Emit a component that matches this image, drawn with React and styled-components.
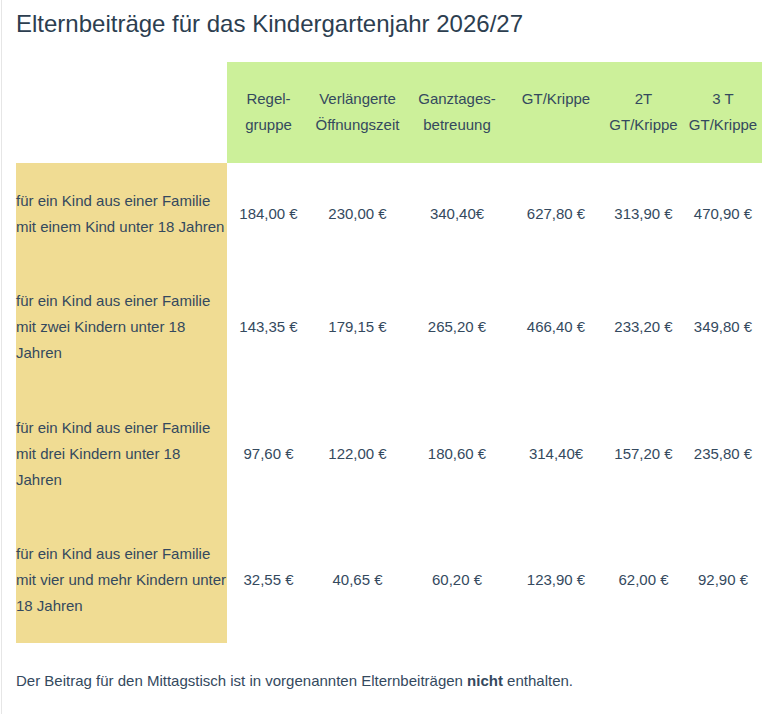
import React from "react";
import styled, { createGlobalStyle } from "styled-components";

const GlobalStyle = createGlobalStyle`
  html, body {
    margin: 0;
    padding: 0;
    background: #ffffff;
  }
  body {
    font-family: "Liberation Sans", Arial, sans-serif;
    color: #34495e;
  }
`;

// column widths, first is the label column
const widths = [211, 83, 95, 104, 94, 81, 78];

const headers = [
  ["Regel-", "gruppe"],
  ["Verlängerte", "Öffnungszeit"],
  ["Ganztages-", "betreuung"],
  ["GT/Krippe"],
  ["2T", "GT/Krippe"],
  ["3 T", "GT/Krippe"],
];

const rows = [
  {
    label: ["für ein Kind aus einer Familie", "mit einem Kind unter 18 Jahren"],
    values: ["184,00 €", "230,00 €", "340,40€", "627,80 €", "313,90 €", "470,90 €"],
  },
  {
    label: ["für ein Kind aus einer Familie", "mit zwei Kindern unter 18", "Jahren"],
    values: ["143,35 €", "179,15 €", "265,20 €", "466,40 €", "233,20 €", "349,80 €"],
  },
  {
    label: ["für ein Kind aus einer Familie", "mit drei Kindern unter 18", "Jahren"],
    values: ["97,60 €", "122,00 €", "180,60 €", "314,40€", "157,20 €", "235,80 €"],
  },
  {
    label: ["für ein Kind aus einer Familie", "mit vier und mehr Kindern unter", "18 Jahren"],
    values: ["32,55 €", "40,65 €", "60,20 €", "123,90 €", "62,00 €", "92,90 €"],
  },
];

const Page = styled.div`
  margin-left: 1px;
  border-left: 1px solid #e6e6e6;
  padding: 9px 0 30px 14px;
  min-height: 680px;
`;

const Title = styled.h2`
  margin: 0 0 24px;
  font-size: 24px;
  font-weight: 400;
  line-height: 29px;
  color: #2c3e50;
`;

const Table = styled.table`
  border-collapse: collapse;
  table-layout: fixed;
  width: 746px;
  font-size: 15px;
  line-height: 26px;
`;

const HeadCell = styled.th`
  padding: 24px 0 25px;
  font-weight: 400;
  text-align: center;
  white-space: nowrap;
  vertical-align: top;
  background: ${(p) => (p.$empty ? "transparent" : "#ccf09a")};
`;

const LabelCell = styled.td`
  padding: 24.5px 0 24px;
  background: #f0dc93;
  white-space: nowrap;
  vertical-align: middle;
`;

const ValueCell = styled.td`
  padding: 24.5px 0 24px;
  text-align: center;
  white-space: nowrap;
  vertical-align: middle;
`;

const Note = styled.p`
  margin: 25px 0 0;
  font-size: 15px;
  line-height: 26px;
`;

const Lines = ({ lines }) =>
  lines.map((l, i) => (
    <React.Fragment key={i}>
      {i > 0 && <br />}
      {l}
    </React.Fragment>
  ));

export default function App() {
  return (
    <>
      <GlobalStyle />
      <Page>
        <Title>Elternbeiträge für das Kindergartenjahr 2026/27</Title>
        <Table>
          <colgroup>
            {widths.map((w, i) => (
              <col key={i} style={{ width: w }} />
            ))}
          </colgroup>
          <thead>
            <tr>
              <HeadCell $empty />
              {headers.map((h, i) => (
                <HeadCell key={i}>
                  <Lines lines={h} />
                </HeadCell>
              ))}
            </tr>
          </thead>
          <tbody>
            {rows.map((r, i) => (
              <tr key={i}>
                <LabelCell>
                  <Lines lines={r.label} />
                </LabelCell>
                {r.values.map((v, j) => (
                  <ValueCell key={j}>{v}</ValueCell>
                ))}
              </tr>
            ))}
          </tbody>
        </Table>
        <Note>
          Der Beitrag für den Mittagstisch ist in vorgenannten Elternbeiträgen <b>nicht</b> enthalten.
        </Note>
      </Page>
    </>
  );
}
